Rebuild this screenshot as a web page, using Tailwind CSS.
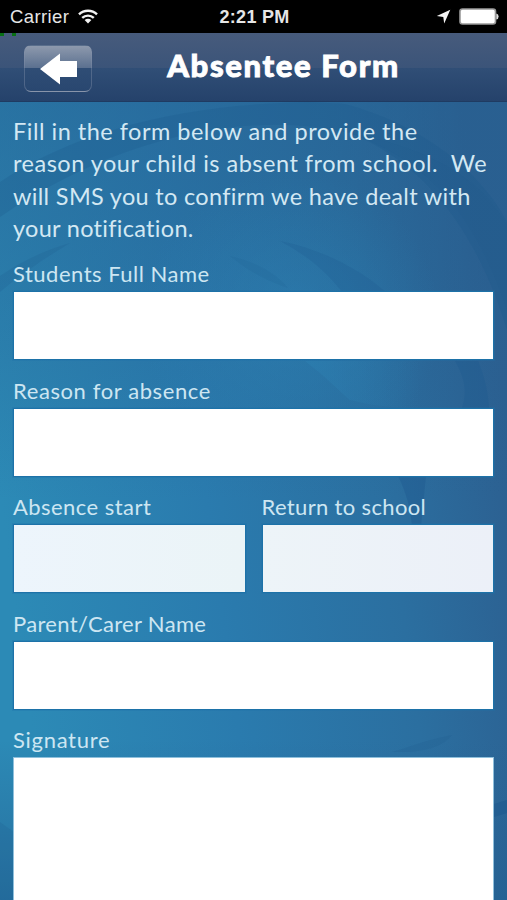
<!DOCTYPE html>
<html lang="en">
<head>
  <meta charset="UTF-8" />
  <meta name="viewport" content="width=device-width, initial-scale=1.0" />
  <title>Absentee Form</title>
  <script src="https://cdn.jsdelivr.net/npm/@tailwindcss/browser@4"></script>
</head>
<body class="h-[900px] overflow-hidden bg-[#2b78a9] font-['Lato',sans-serif]">
  <div class="relative isolate flex h-[900px] w-[507px] flex-col overflow-hidden">

    <!-- Swirl background -->
    <svg class="absolute inset-0 -z-10" width="507" height="900" viewBox="0 0 507 900" fill="none">
      <defs>
        <linearGradient id="base" x1="0" y1="500" x2="507" y2="430" gradientUnits="userSpaceOnUse">
          <stop offset="0" stop-color="#2c8ab6" />
          <stop offset=".4" stop-color="#2a7bae" />
          <stop offset=".75" stop-color="#2b6fa0" />
          <stop offset="1" stop-color="#2c6091" />
        </linearGradient>
        <linearGradient id="shade" x1="0" y1="100" x2="0" y2="900" gradientUnits="userSpaceOnUse">
          <stop offset="0" stop-color="#265f90" stop-opacity=".5" />
          <stop offset=".3" stop-color="#265f90" stop-opacity=".25" />
          <stop offset=".5" stop-color="#265f90" stop-opacity="0" />
          <stop offset=".8" stop-color="#265f90" stop-opacity="0" />
          <stop offset="1" stop-color="#205e90" stop-opacity=".6" />
        </linearGradient>
        <radialGradient id="glow" cx="290" cy="320" r="150" gradientUnits="userSpaceOnUse">
          <stop offset="0" stop-color="#2b83b5" stop-opacity=".5" />
          <stop offset="1" stop-color="#2b83b5" stop-opacity="0" />
        </radialGradient>
        <linearGradient id="petal" x1="305" y1="0" x2="420" y2="0" gradientUnits="userSpaceOnUse">
          <stop offset="0" stop-color="#2d83b5" stop-opacity=".4" />
          <stop offset="1" stop-color="#2d83b5" stop-opacity="0" />
        </linearGradient>
      </defs>
      <rect width="507" height="900" fill="url(#base)" />
      <rect width="507" height="900" fill="url(#shade)" />
      <rect y="100" width="507" height="400" fill="url(#glow)" />
      <path d="M0 182C80 128 190 104 310 102L345 104C420 124 480 170 507 222V330C480 240 430 165 350 133C250 110 120 135 0 217Z" fill="#1c588d" fill-opacity=".26" />
      <path d="M350 133C440 150 485 185 507 225V310C480 230 440 165 350 133Z" fill="#1c588d" fill-opacity=".1" />
      <path d="M0 276C20 262 45 250 70 243C45 258 20 275 0 292Z" fill="#1c588d" fill-opacity=".2" />
      <path d="M280 241C325 250 365 272 390 296H345C330 275 310 257 280 241Z" fill="#1c588d" fill-opacity=".22" />
      <path d="M230 256C255 262 275 272 288 288C265 280 250 272 230 256Z" fill="#1c588d" fill-opacity=".12" />
      <path d="M305 361C325 376 340 392 350 400Q380 408 420 408V361Z" fill="url(#petal)" />
      <path d="M455 361H478C485 378 488 392 489 408H462C468 392 464 376 455 361Z" fill="#1c588d" fill-opacity=".3" />
      <path d="M398 476H426L421 526H412C410 505 405 490 398 476Z" fill="#1c588d" fill-opacity=".38" />
      <path d="M392 752C412 746 430 739 452 735C445 745 430 750 410 752Z" fill="#1c588d" fill-opacity=".2" />
      <path d="M507 800L494 804V817L507 813Z" fill="#1c588d" fill-opacity=".5" />
      <path d="M0 822L14 832V900H0Z" fill="#1c588d" fill-opacity=".2" />
    </svg>

    <!-- Status bar -->
    <div class="flex h-[33px] shrink-0 items-center bg-black pb-px font-['Liberation_Sans',sans-serif] text-[18.5px] leading-none text-[#e6e6e6]">
      <div class="flex flex-1 items-center gap-[9px] pl-[10px]">
        <span class="pt-[3px] tracking-[0.4px]">Carrier</span>
        <svg width="20" height="15" viewBox="0 0 20 15" fill="none" stroke="#f2f2f2" stroke-width="2.4">
          <path d="M1 5.4C6 .5 14 .5 19 5.4" />
          <path d="M4.2 8.9C7.4 5.8 12.6 5.8 15.8 8.9" />
          <path d="M10 14.5L6.6 11.1Q10 8.4 13.4 11.1Z" fill="#f2f2f2" stroke="none" />
        </svg>
      </div>
      <span class="pt-[2px] text-[18px] font-bold tracking-[0.25px]">2:21 PM</span>
      <div class="flex flex-1 items-center justify-end gap-[8px] pr-[8px] pt-px">
        <svg width="15" height="15" viewBox="0 0 15 15" fill="#f5f5f5">
          <path d="M14.3 .8L8.2 14.5L7.3 8L.8 7.1Z" />
        </svg>
        <svg width="40" height="17" viewBox="0 0 40 17">
          <rect x="1" y="1" width="35.5" height="15" rx="2.5" fill="#fff" stroke="#9a9a9a" stroke-width="1.6" />
          <path d="M37.3 5.5Q39.6 6 39.6 8.5T37.3 11.5Z" fill="#ddd" />
        </svg>
      </div>
    </div>

    <!-- Nav bar -->
    <header class="relative flex h-[69px] shrink-0 items-center justify-center border-b border-[#1f3b62] bg-[linear-gradient(#475b7c,#3b5479_51%,#304e76_52%,#25426b)]">
      <div class="absolute left-0 top-0 h-[3px] w-[4px] bg-[#087014]"></div>
      <div class="absolute left-[12px] top-0 h-[3px] w-[4px] bg-[#087014]"></div>
      <button class="absolute left-[24px] top-[12px] flex h-[47px] w-[68px] items-center justify-center rounded-[7px] border border-[#8794ab]/40 border-t-[#8c97ab]/50 border-b-[#8794ab]/80 bg-[linear-gradient(#8d99ad,#5c7190_48%,#2f4d75_50%,#294770)]">
        <svg class="relative left-[1px]" width="38" height="32" viewBox="0 0 38 32" fill="#fff">
          <path d="M0 16L20 .5V8H37V24H20V31.5Z" />
        </svg>
      </button>
      <h1 class="relative left-[30px] -top-[2px] whitespace-nowrap text-[31px] font-black leading-none tracking-[1.65px] text-white [-webkit-text-stroke:0.9px_white]">Absentee Form</h1>
    </header>

    <!-- Form -->
    <main class="flex-1 px-[13px] pt-[13px]">
      <p class="h-[142.4px] whitespace-pre text-[23.5px] leading-[32.4px] text-[#d3e8f3]"><span class="block tracking-[0.5px]">Fill in the form below and provide the</span><span class="block tracking-[0.5px]">reason your child is absent from school.  We</span><span class="block tracking-[0.32px]">will SMS you to confirm we have dealt with</span><span class="block tracking-[0.3px]">your notification.</span></p>

      <div class="flex flex-col text-[22px] leading-[34px] text-[#cde6f2]">
        <label class="flex h-[116.4px] flex-col">
          <span class="tracking-[0.5px]">Students Full Name</span>
          <input class="h-[69px] w-full border border-[#1d72a8] bg-white outline outline-[#1d72a8]/30" />
        </label>
        <label class="flex h-[116.4px] flex-col">
          <span class="tracking-[0.6px]">Reason for absence</span>
          <input class="h-[69px] w-full border border-[#1d72a8] bg-white outline outline-[#1d72a8]/30" />
        </label>
        <div class="flex h-[116.4px] gap-[16px]">
          <label class="flex flex-1 flex-col">
            <span class="tracking-[0.45px]">Absence start</span>
            <input class="h-[69px] w-full border border-[#1d72a8] bg-linear-to-r from-[#edf5fc] to-[#ebf4f7] outline outline-[#1d72a8]/30" />
          </label>
          <label class="flex flex-1 flex-col">
            <span class="tracking-[0.35px]">Return to school</span>
            <input class="h-[69px] w-full border border-[#1d72a8] bg-linear-to-r from-[#edf4f8] to-[#ecf0f8] outline outline-[#1d72a8]/30" />
          </label>
        </div>
        <label class="flex h-[116.4px] flex-col">
          <span class="tracking-[0.32px]">Parent/Carer Name</span>
          <input class="h-[69px] w-full border border-[#1d72a8] bg-white outline outline-[#1d72a8]/30" />
        </label>
        <label class="flex flex-col">
          <span class="tracking-[0.7px]">Signature</span>
          <textarea class="h-[160px] w-full resize-none border border-[#8fc0dc] bg-white"></textarea>
        </label>
      </div>
    </main>
  </div>
</body>
</html>
